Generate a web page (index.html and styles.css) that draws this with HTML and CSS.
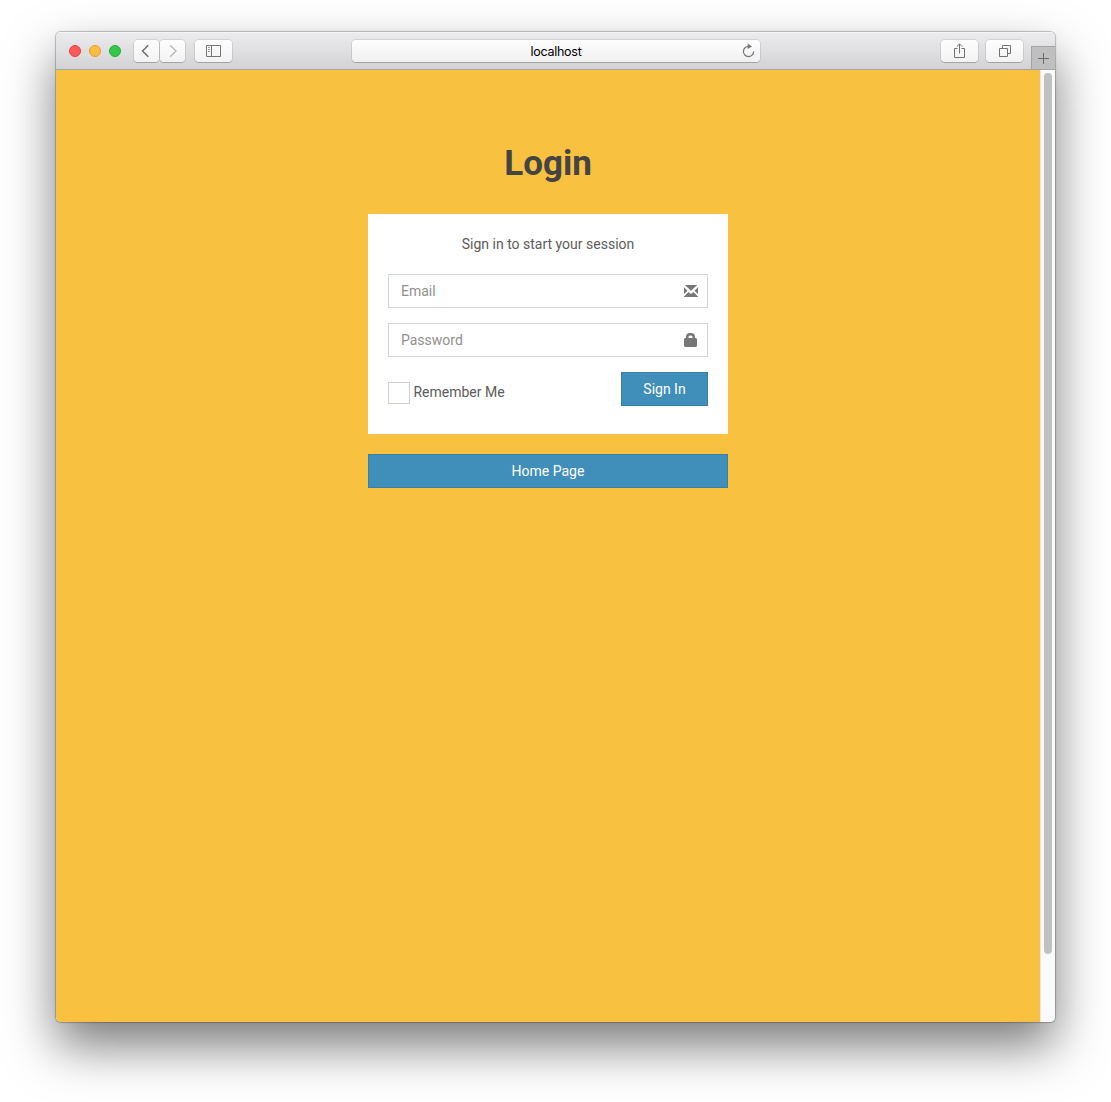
FILE: index.html
```html
<!DOCTYPE html>
<html lang="en">
<head>
<meta charset="utf-8">
<title>Login</title>
<link rel="stylesheet" href="styles.css">
</head>
<body>
<div class="window">
  <header class="toolbar">
    <div class="lights"><span class="light red"></span><span class="light yellow"></span><span class="light green"></span></div>
    <div class="nav">
      <span class="tool back"><svg width="25" height="22" viewBox="0 0 25 22"><path d="M14.300 5.300 8.500 11l5.800 5.700" stroke="#6d6d6d" stroke-width="1.500"/></svg></span>
      <span class="tool forward"><svg width="25" height="22" viewBox="0 0 25 22"><path d="m10.200 5.300 5.800 5.700-5.800 5.700" stroke="#b9b9b9" stroke-width="1.400"/></svg></span>
    </div>
    <span class="tool side"><svg width="37" height="22" viewBox="0 0 37 22"><path d="M11.500 5.500h14v11h-14zM16.500 5.500v11" stroke="#737373"/><path d="M13 7.500h2M13 9.500h2M13 11.500h2" stroke="#999"/></svg></span>
    <div class="address"><span>localhost</span><svg class="reload" width="14" height="16" viewBox="0 0 14 16"><path d="M7.700 3.400A5.100 5.100 0 1 0 12.600 8.500" stroke="#777" stroke-width="1.200"/><path d="M6.700.5 11 3.400 6.700 6z" fill="#777"/></svg></div>
    <span class="tool share"><svg width="37" height="22" viewBox="0 0 37 22"><path d="M16.500 8.500h-3v9h10v-9h-3M18.500 13.500V4M15.700 6.700l2.800-2.800 2.800 2.800" stroke="#737373"/></svg></span>
    <span class="tool tabs"><svg width="37" height="22" viewBox="0 0 37 22"><path d="M13.500 8.500h8v8h-8zM16.500 8v-2.500h8v8h-2.500" stroke="#737373"/></svg></span>
    <span class="new-tab"><svg width="24" height="23" viewBox="0 0 24 23"><path d="M6 12.500h11M11.500 7v11" stroke="#6b6b6b"/></svg></span>
  </header>
  <div class="viewport">
    <main class="page">
      <div class="login">
        <h1 class="title">Login</h1>
        <form class="card">
          <p class="intro">Sign in to start your session</p>
          <label class="field"><input class="input" type="text" placeholder="Email"><svg class="glyph" width="14" height="12" viewBox="0 0 14 12"><path d="M.8 0h12.400L7 5.700zM0 2.300 3.500 5.700 0 9zM14 2.300V9l-3.500-3.300zM4.600 7 7 9.100 9.400 7 14 11.400v.6H0v-.6z"/></svg></label>
          <label class="field"><input class="input" type="password" placeholder="Password"><svg class="glyph lock" width="13" height="14" viewBox="0 0 13 14"><path fill-rule="evenodd" d="M1 5h1V4a4 4 0 0 1 4-4h1a4 4 0 0 1 4 4v1h1l1 1v7l-1 1H1l-1-1V6zM4.500 5h4V4a1.500 1.500 0 0 0-1.500-1.500H6A1.500 1.500 0 0 0 4.500 4z"/></svg></label>
          <div class="actions">
            <label class="remember"><span class="check"></span><span class="caption">Remember Me</span></label>
            <button class="btn submit" type="button">Sign In</button>
          </div>
        </form>
        <button class="btn home" type="button">Home Page</button>
      </div>
    </main>
    <div class="scrollbar"><div class="thumb"></div></div>
  </div>
</div>
</body>
</html>
```
FILE: styles.css
```css
* { box-sizing: border-box; }
body { margin: 0; padding: 32px 56px 80px; height: 1102px; overflow: hidden; background: #fff; color: #5c5c5c; font: 14px/20px Roboto, sans-serif; }
svg { display: block; fill: none; }
.window { width: 999px; height: 990px; border-radius: 5px; overflow: hidden; box-shadow: 0 0 1px 1px rgba(0,0,0,.24), 0 24px 50px rgba(0,0,0,.52); }
.toolbar { display: flex; height: 38px; padding-top: 8px; background: linear-gradient(#ececee, #d3d3d5); border-bottom: 1px solid #a5a5a7; box-shadow: inset 0 1px #f5f5f5; }
.lights { display: flex; gap: 8px; padding: 5px 0 0 13px; width: 78px; }
.light { width: 12px; height: 12px; border-radius: 50%; border: 1px solid; }
.red { background: #fc5b57; border-color: #e2443f; }
.yellow { background: #fdbc40; border-color: #e0a032; }
.green { background: #34c84a; border-color: #24ac36; }
.nav { display: flex; gap: 1px; }
.tool { height: 22px; border-radius: 4px; background: linear-gradient(#fefefe, #f3f3f3); box-shadow: 0 0 0 1px rgba(0,0,0,.09), 0 1px rgba(0,0,0,.16); }
.side { margin-left: 10px; }
.address { display: flex; align-items: center; width: 408px; height: 22px; margin-left: 120px; padding: 0 5px 0 22px; border-radius: 4px; background: linear-gradient(#fefefe, #f0f0f0); box-shadow: 0 0 0 1px rgba(0,0,0,.09), 0 1px rgba(0,0,0,.16); color: #000; font: 12.5px/22px Inter, sans-serif; letter-spacing: -.27px; }
.address span { flex: 1; text-align: center; padding: 2px 3px 0 0; }
.share { margin-left: 181px; }
.tabs { margin-left: 8px; }
.new-tab { width: 24px; height: 23px; margin: 6px 0 0 auto; background: #bfbfc0; border: solid #a3a3a4; border-width: 1px 0 0 1px; }
.new-tab svg { margin: -1px 0 0; }
.viewport { display: flex; height: 952px; }
.page { flex: 1; display: flex; justify-content: center; align-items: flex-start; padding-top: 69px; background: #f8c13f; }
.login { width: 360px; }
.title { margin: 0 0 25px; color: #444; font-size: 35px; line-height: 50px; font-weight: 700; text-align: center; }
.card { height: 220px; padding: 20px; background: #fff; }
.intro { margin: 0 0 20px; text-align: center; }
.field { position: relative; display: block; height: 34px; margin-bottom: 15px; }
.input { display: block; width: 100%; height: 34px; padding: 6px 42px 6px 12px; border: 1px solid #d2d6de; border-radius: 0; background: #fff; font: inherit; outline: 0; }
.input::placeholder { color: #909090; opacity: 1; }
.glyph { position: absolute; right: 10px; top: 11px; fill: #777; }
.lock { right: 11px; top: 10px; }
.actions { display: flex; justify-content: space-between; align-items: flex-start; }
.remember { display: flex; align-items: flex-start; gap: 3.4px; height: 22px; margin-top: 10px; }
.check { width: 22px; height: 22px; border: 1px solid #d2cfc9; background: #fff; }
.btn { height: 34px; padding: 0; border: 1px solid #3980a8; background: #408fbb; color: #fff; font: inherit; }
.submit { width: 87px; }
.home { display: block; width: 100%; margin-top: 20px; }
.scrollbar { width: 15px; padding: 3px 3px 0; background: #fafafa; border-left: 1px solid #e7e7e7; }
.thumb { width: 8px; height: 881px; border-radius: 4px; background: #c1c1c1; }
```
